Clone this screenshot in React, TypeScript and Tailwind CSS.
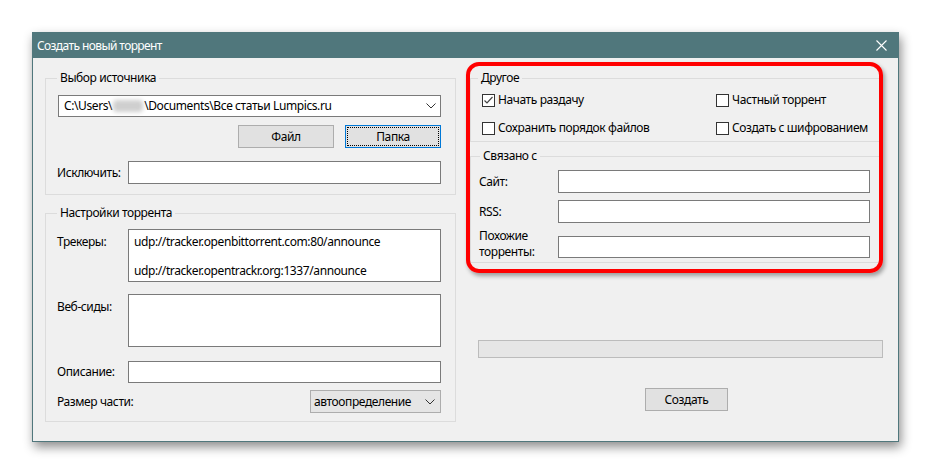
import React from 'react';

function Chevron() {
  return (
    <svg width="10" height="6" viewBox="0 0 10 6" className="shrink-0">
      <polyline points="0.5,0.5 5,5 9.5,0.5" fill="none" stroke="#333" strokeWidth="1" />
    </svg>
  );
}

function CheckBox({ checked, label }: { checked?: boolean; label: string }) {
  return (
    <div className="flex items-center h-[16px]">
      <div className="w-[13px] h-[13px] border border-[#333] bg-white flex items-center justify-center">
        {checked && (
          <svg width="11" height="11" viewBox="0 0 11 11">
            <polyline points="1.5,5.5 4,8 9.5,2" fill="none" stroke="#444" strokeWidth="1.2" />
          </svg>
        )}
      </div>
      <span className="ml-[3px]">{label}</span>
    </div>
  );
}

function Legend({ text, className }: { text: string; className: string }) {
  return <div className={`-mt-[9px] h-[16px] leading-[16px] w-fit px-[3px] bg-[#f0f0f0] ${className}`}>{text}</div>;
}

export default function App() {
  return (
    <div className="w-[931px] h-[474px] bg-white pt-[32px] pl-[32px] text-[12px] leading-[16px] tracking-[-0.4px] text-black font-['Noto_Sans',sans-serif]">
      <div className="w-[867px] h-[410px] border border-[#50777c] flex flex-col shadow-[2px_5px_10px_rgba(0,0,0,0.45)]">
        {/* title bar */}
        <div className="h-[25px] bg-[#50777c] flex items-center pl-[4px] pr-[10px] text-white">
          <span className="text-[12px] tracking-[-0.6px]">Создать новый торрент</span>
          <svg width="11" height="11" viewBox="0 0 11 11" className="ml-auto mr-[1px]">
            <path d="M0.5 0.5 L10.5 10.5 M10.5 0.5 L0.5 10.5" stroke="white" strokeWidth="1.1" />
          </svg>
        </div>

        <div className="flex-1 bg-[#f0f0f0] flex pl-[12px] pt-[20px]">
          {/* left column */}
          <div className="w-[411px] flex flex-col">
            <div className="h-[117px] border border-[#dcdcdc] pl-[12px] pr-[14px] flex flex-col">
              <Legend text="Выбор источника" className="ml-[-1px]" />
              <div className="mt-[9px] h-[22px] bg-white border border-[#7a7a7a] flex items-center pl-[5px] pr-[4px]">
                <span className="flex items-center">
                  C:\Users\
                  <span className="inline-block w-[30px] h-[12px] bg-[#cfcfcf] rounded-[4px] blur-[2px] mx-[1px]" />
                  \Documents\Все статьи Lumpics.ru
                </span>
                <span className="ml-auto"><Chevron /></span>
              </div>
              <div className="mt-[8px] flex justify-end gap-[11px]">
                <button className="w-[96px] h-[23px] bg-[#e1e1e1] border border-[#adadad]">Файл</button>
                <button className="w-[96px] h-[23px] bg-[#e1e1e1] border border-[#0078d7] p-[1px]">
                  <div className="w-full h-full border border-dotted border-black flex items-center justify-center">Папка</div>
                </button>
              </div>
              <div className="mt-[13px] flex items-center">
                <span className="w-[71px] -ml-[1px]">Исключить:</span>
                <div className="flex-1 h-[23px] bg-white border border-[#7a7a7a]" />
              </div>
            </div>

            <div className="mt-[18px] h-[209px] border border-[#dcdcdc] pl-[12px] pr-[14px] flex flex-col">
              <Legend text="Настройки торрента" className="ml-[-1px]" />
              <div className="mt-[8px] flex">
                <span className="w-[71px] -ml-[1px] pt-[5px]">Трекеры:</span>
                <div className="flex-1 h-[53px] bg-white border border-[#7a7a7a] pl-[5px] pt-[4px]">
                  <div>udp://tracker.openbittorrent.com:80/announce</div>
                  <div className="mt-[13px]">udp://tracker.opentrackr.org:1337/announce</div>
                </div>
              </div>
              <div className="mt-[12px] flex">
                <span className="w-[71px] -ml-[1px] pt-[5px]">Веб-сиды:</span>
                <div className="flex-1 h-[53px] bg-white border border-[#7a7a7a]" />
              </div>
              <div className="mt-[14px] flex items-center">
                <span className="w-[71px] -ml-[1px]">Описание:</span>
                <div className="flex-1 h-[22px] bg-white border border-[#7a7a7a]" />
              </div>
              <div className="mt-[7px] flex items-center">
                <span className="-ml-[1px]">Размер части:</span>
                <div className="ml-auto w-[131px] h-[23px] bg-[#e5e5e5] border border-[#adadad] flex items-center pl-[3px] pr-[5px]">
                  <span>автоопределение</span>
                  <span className="ml-auto"><Chevron /></span>
                </div>
              </div>
            </div>
          </div>

          {/* right column */}
          <div className="relative ml-[14px] w-[410px] flex flex-col">
            <div className="h-[64px] border border-[#dcdcdc] pl-[11px] flex flex-col">
              <Legend text="Другое" className="-ml-[4px]" />
              <div className="mt-[6px] grid grid-cols-[234px_1fr] gap-y-[12px]">
                <CheckBox checked label="Начать раздачу" />
                <CheckBox label="Частный торрент" />
                <CheckBox label="Сохранить порядок файлов" />
                <CheckBox label="Создать с шифрованием" />
              </div>
            </div>

            <div className="mt-[14px] h-[107px] border border-[#dcdcdc] pl-[8px] pr-[9px] flex flex-col">
              <Legend text="Связано с" className="ml-[1px]" />
              <div className="mt-[6px] flex items-center">
                <span className="w-[79px]">Сайт:</span>
                <div className="flex-1 h-[23px] bg-white border border-[#7a7a7a]" />
              </div>
              <div className="mt-[7px] flex items-center">
                <span className="w-[79px]">RSS:</span>
                <div className="flex-1 h-[23px] bg-white border border-[#7a7a7a]" />
              </div>
              <div className="mt-[10px] flex items-center">
                <span className="w-[79px] leading-[16px] -mt-[5px]">Похожие<br />торренты:</span>
                <div className="flex-1 h-[22px] bg-white border border-[#7a7a7a]" />
              </div>
            </div>

            <div className="mt-[77px] ml-[8px] w-[405px] h-[18px] bg-[#e6e6e6] border border-[#bcbcbc]" />

            <button className="mt-[30px] ml-[175px] w-[83px] h-[23px] bg-[#e1e1e1] border border-[#adadad]">Создать</button>

            {/* red highlight drawn over the options */}
            <div className="absolute -left-[4px] -top-[16px] w-[417px] h-[211px] border-[4px] border-[#ff0000] rounded-[13px] shadow-[2px_3px_4px_rgba(0,0,0,0.35)] pointer-events-none" />
          </div>
        </div>
      </div>
    </div>
  );
}
